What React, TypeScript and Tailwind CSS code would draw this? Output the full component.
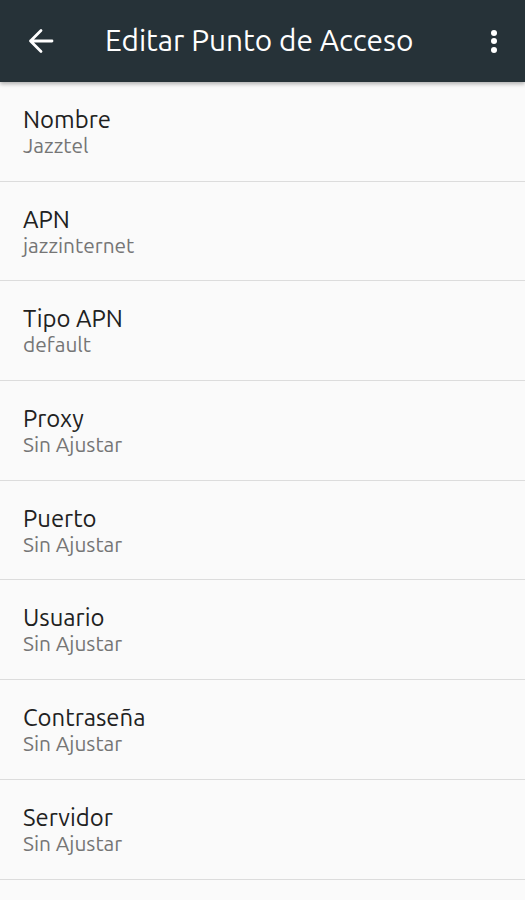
const rows = [
  { title: "Nombre", value: "Jazztel" },
  { title: "APN", value: "jazzinternet" },
  { title: "Tipo APN", value: "default" },
  { title: "Proxy", value: "Sin Ajustar" },
  { title: "Puerto", value: "Sin Ajustar" },
  { title: "Usuario", value: "Sin Ajustar" },
  { title: "Contraseña", value: "Sin Ajustar" },
  { title: "Servidor", value: "Sin Ajustar" },
];

export default function App() {
  return (
    <div className="w-[525px] h-[900px] overflow-hidden bg-[#fafafa]" style={{ fontFamily: "Ubuntu, 'Open Sans', 'Noto Sans', sans-serif" }}>
      {/* Toolbar */}
      <div className="relative z-10 h-[82px] bg-[#263238] flex items-center shadow-[0_2px_4px_rgba(0,0,0,0.3)]">
        <div className="w-[105px] pl-[29px]">
          <svg width="24" height="24" viewBox="0 0 24 24" fill="none" stroke="white" strokeWidth="2.8" strokeLinecap="round" strokeLinejoin="round" className="overflow-visible">
            <path d="M23 12H1.5M12 1.5L1.5 12L12 22.5" />
          </svg>
        </div>
        <div className="flex-1 text-white text-[29.8px] leading-none">Editar Punto de Acceso</div>
        <div className="w-[64px] flex flex-col items-center gap-[2.5px] pl-[1px]">
          <div className="w-[6px] h-[6px] rounded-full bg-white" />
          <div className="w-[6px] h-[6px] rounded-full bg-white" />
          <div className="w-[6px] h-[6px] rounded-full bg-white" />
        </div>
      </div>

      {/* List */}
      <div>
        {rows.map((r) => (
          <div key={r.title} className="h-[99.7px] border-b border-[#dcdcdc] pl-[23px] pt-[23px]">
            <div className="text-[23.9px] leading-[29px] text-[#212121]">{r.title}</div>
            <div className="text-[20.9px] leading-[24px] text-[#757575]">{r.value}</div>
          </div>
        ))}
      </div>
    </div>
  );
}
